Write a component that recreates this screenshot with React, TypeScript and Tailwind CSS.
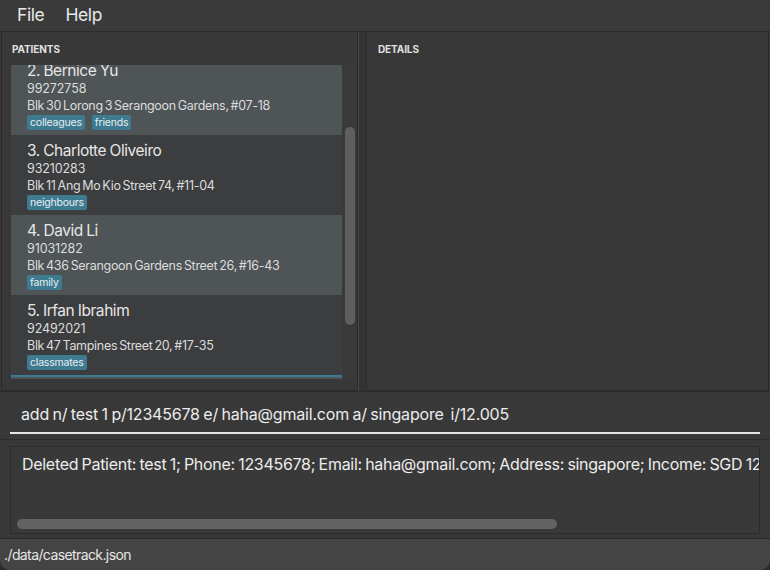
import React from 'react';

type Patient = {
    name: string;
    phone: string;
    address: string;
    tags: string[];
};

const patients: Patient[] = [
    { name: '2. Bernice Yu', phone: '99272758', address: 'Blk 30 Lorong 3 Serangoon Gardens, #07-18', tags: ['colleagues', 'friends'] },
    { name: '3. Charlotte Oliveiro', phone: '93210283', address: 'Blk 11 Ang Mo Kio Street 74, #11-04', tags: ['neighbours'] },
    { name: '4. David Li', phone: '91031282', address: 'Blk 436 Serangoon Gardens Street 26, #16-43', tags: ['family'] },
    { name: '5. Irfan Ibrahim', phone: '92492021', address: 'Blk 47 Tampines Street 20, #17-35', tags: ['classmates'] },
    { name: '6. Roy Balakrishnan', phone: '92624417', address: 'Blk 45 Aljunied Street 85, #11-31', tags: ['colleagues'] },
];

const PatientCard = ({ p, index }: { p: Patient; index: number }) => {
    const even = index % 2 === 0;
    const selected = index === 4;
    return (
        <div
            className={
                'h-[80px] shrink-0 pl-[16px] pt-[6px] ' +
                (even ? 'bg-[#4f5457] ' : 'bg-[#3c3d3f] ') +
                (selected ? 'border-t-2 border-[#3e7b91]' : '')
            }
        >
            <div className="text-[15.5px] leading-[19px] tracking-[-0.45px] [word-spacing:-0.5px] text-[#e6e6e6]">{p.name}</div>
            <div className="text-[12.5px] leading-[17px] tracking-[-0.1px] text-[#dcdcdc]">{p.phone}</div>
            <div className="text-[12.5px] leading-[17px] tracking-[-0.3px] [word-spacing:-1.3px] text-[#dcdcdc]">{p.address}</div>
            <div className="mt-[1px] flex gap-[7px]">
                {p.tags.map((t) => (
                    <span key={t} className="h-[15px] rounded-[2px] bg-[#3e7b91] px-[3px] text-[10.5px] leading-[15px] tracking-[-0.2px] text-[#e8eef0]">
                        {t}
                    </span>
                ))}
            </div>
        </div>
    );
};

export default function App() {
    return (
        <div className="h-[570px] w-[770px] overflow-hidden bg-[#263020] font-['Inter','Noto_Sans',sans-serif]">
            <div className="flex h-full w-full flex-col overflow-hidden rounded-b-[10px] bg-[#383838]">
                {/* Menu bar */}
                <div className="flex h-[32px] shrink-0 items-center gap-[21px] border-b border-[#2b2b2b] bg-[#3a3a3a] pl-[17px] text-[17.5px] tracking-[-0.4px] text-[#e8e8e8]">
                    <span>File</span>
                    <span>Help</span>
                </div>

                {/* Split pane */}
                <div className="flex h-[359px] shrink-0">
                    <div className="ml-[1px] flex w-[357px] shrink-0 flex-col border border-t-0 border-[#2b2b2b] bg-[#383838]">
                        <div className="h-[33px] shrink-0 pl-[10px] pt-[11px] text-[10px] font-bold leading-[13px] tracking-[-0.1px] text-[#e0e0e0]">
                            PATIENTS
                        </div>
                        <div className="ml-[9px] flex h-[314px] overflow-hidden">
                            <div className="flex w-[331px] flex-col overflow-hidden">
                                <div className="-mt-[10px] flex flex-col">
                                    {patients.map((p, i) => (
                                        <PatientCard key={p.name} p={p} index={i} />
                                    ))}
                                </div>
                            </div>
                            <div className="w-[14px] bg-[#3a3a3a] pl-[3px] pt-[62px]">
                                <div className="h-[198px] w-[10px] rounded-[5px] bg-[#5f5f5f]" />
                            </div>
                        </div>
                    </div>
                    <div className="w-[8px] shrink-0 border-l border-[#474747] bg-[#333333]" />
                    <div className="mr-[1px] flex-1 border border-t-0 border-[#2b2b2b] bg-[#383838]">
                        <div className="pl-[11px] pt-[11px] text-[10px] font-bold leading-[13px] tracking-[-0.1px] text-[#e0e0e0]">DETAILS</div>
                    </div>
                </div>

                {/* Command box */}
                <div className="flex h-[49px] shrink-0 flex-col border-y border-[#2b2b2b] px-[10px] pt-[4px]">
                    <div className="flex h-[38px] items-center whitespace-nowrap border-b-2 border-[#e6e6e6] pl-[11px] text-[16px] leading-[20px] tracking-[-0.2px] [word-spacing:-0.8px] text-[#ececec]">
                        add n/ test 1 p/12345678 e/ haha@gmail.com a/ singapore&nbsp; i/12.005
                    </div>
                </div>

                {/* Result display */}
                <div className="h-[99px] shrink-0 border-b border-[#2b2b2b] px-[10px] pt-[6px]">
                    <div className="flex h-[88px] flex-col overflow-hidden border border-[#2b2b2b] bg-[#393939]">
                        <div className="whitespace-nowrap pl-[11px] pt-[6px] text-[16px] leading-[22px] tracking-[-0.3px] [word-spacing:-0.8px] text-[#ececec]">
                            Deleted Patient: test 1; Phone: 12345678; Email: haha@gmail.com; Address: singapore; Income: SGD 12.005
                        </div>
                        <div className="mb-[4px] ml-[6px] mt-auto h-[10px] w-[540px] rounded-[5px] bg-[#636363]" />
                    </div>
                </div>

                {/* Status bar */}
                <div className="flex flex-1 items-center bg-[#444444] pl-[4px] text-[14px] tracking-[-0.6px] text-[#e6e6e6]">
                    ./data/casetrack.json
                </div>
            </div>
        </div>
    );
}
